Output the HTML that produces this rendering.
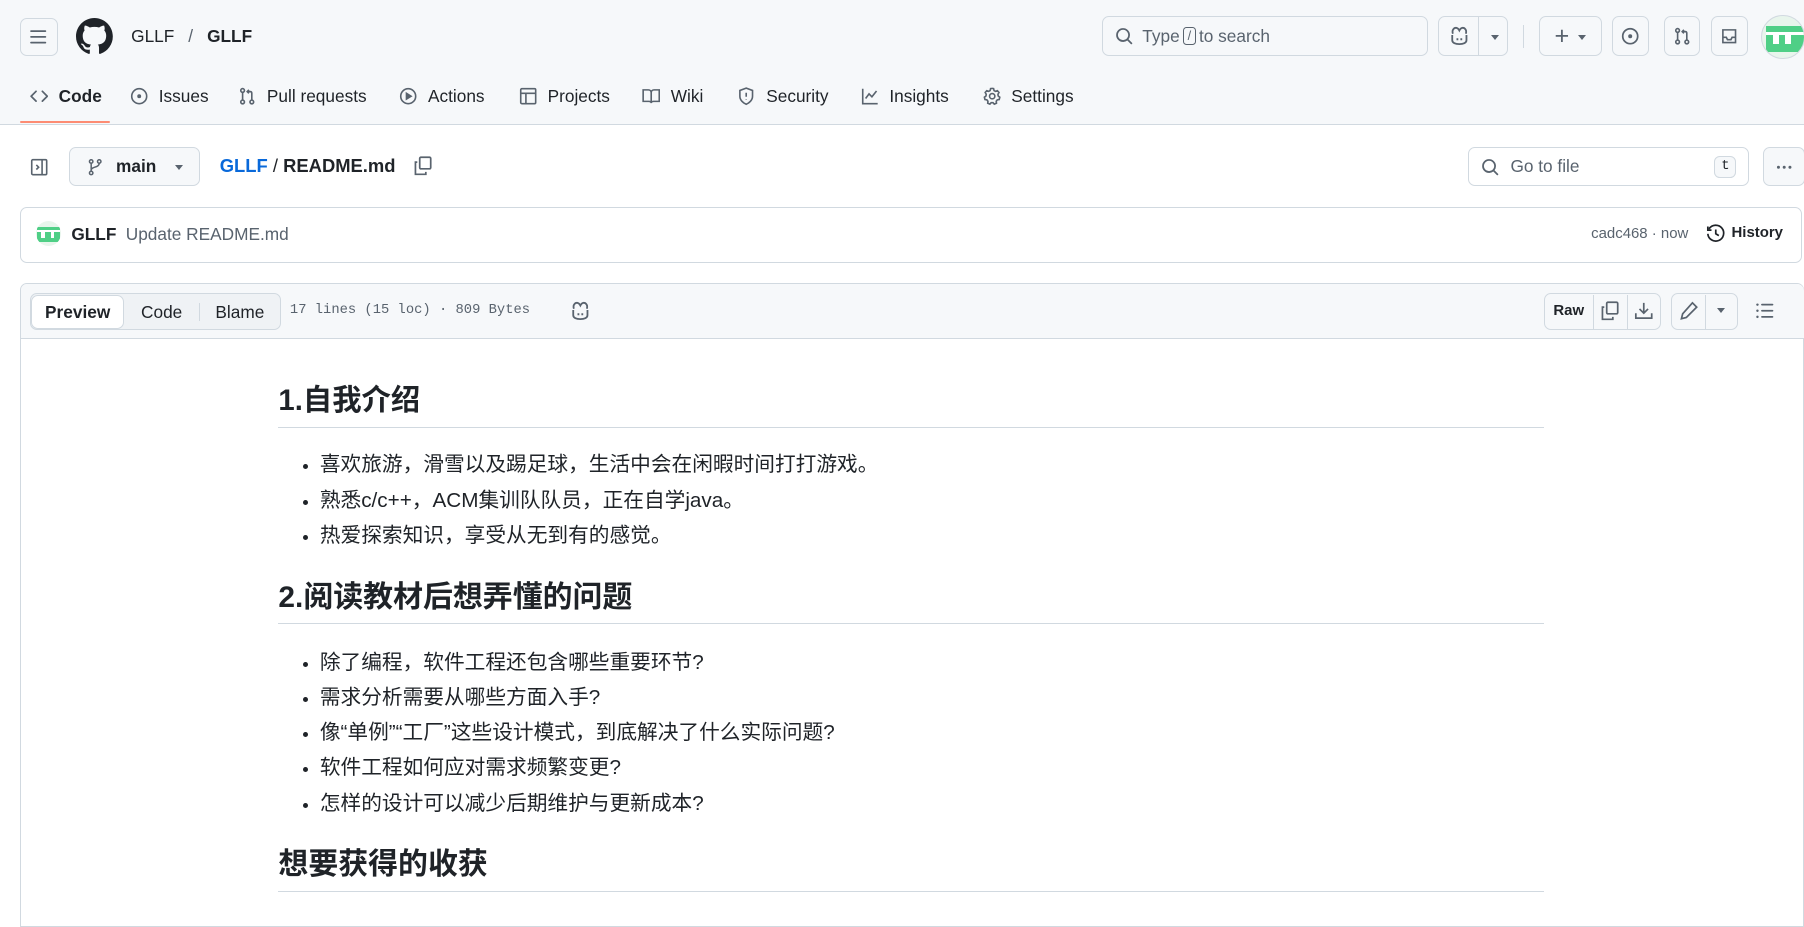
<!DOCTYPE html>
<html><head><meta charset="utf-8"><style>
html{zoom:1.15051}
*{box-sizing:border-box;margin:0;padding:0}
body{width:1568px;height:777px;overflow:hidden;background:#fff;font-family:"Liberation Sans","Noto Sans CJK SC",sans-serif;color:#1f2328;font-size:14px;position:relative}
.a{position:absolute}
.hdr{position:absolute;left:0;top:0;width:1568px;height:109px;background:#f6f8fa;border-bottom:1px solid #d1d9e0}
.btn{position:absolute;border:1px solid #d1d9e0;border-radius:6px;background:#f6f8fa;display:flex;align-items:center;justify-content:center}
svg{display:block}
.tab{position:absolute;top:74px;height:20px;display:flex;align-items:center;gap:9px;font-size:15px;color:#1f2328}
.tab svg{width:16px;height:16px}
.mut{color:#59636e}
.md h2{font-size:26px;font-weight:600;line-height:30px;padding-bottom:7px;border-bottom:1px solid #d1d9e0;margin:0}
.md h2.s{font-size:25.5px}
.md ul{margin:17px 0 24px;padding-left:36px;font-size:18px}
.md ul.b{margin-top:18px}
.md li{line-height:30.6px;height:30.6px}
.md li::marker{font-size:15px}
</style></head><body>
<div class="hdr"></div>
<div class="btn" style="left:17px;top:16px;width:33px;height:33px"><svg width="16" height="16" viewBox="0 0 16 16" fill="#59636e"><path d="M1 2.75A.75.75 0 0 1 1.75 2h12.5a.75.75 0 0 1 0 1.5H1.75A.75.75 0 0 1 1 2.75Zm0 5A.75.75 0 0 1 1.75 7h12.5a.75.75 0 0 1 0 1.5H1.75A.75.75 0 0 1 1 7.75ZM1.75 12h12.5a.75.75 0 0 1 0 1.5H1.75a.75.75 0 0 1 0-1.5Z"/></svg></div>
<svg class="a" style="left:66px;top:16px" width="32" height="32" viewBox="0 0 16 16" fill="#1f2328"><path d="M8 0c4.42 0 8 3.58 8 8a8.013 8.013 0 0 1-5.45 7.59c-.4.08-.55-.17-.55-.38 0-.27.01-1.13.01-2.2 0-.75-.25-1.23-.54-1.48 1.78-.2 3.650-.88 3.65-3.950 0-.88-.31-1.59-.82-2.150.08-.2.36-1.020-.08-2.12 0 0-.67-.22-2.2.82-.64-.18-1.32-.27-2-.27-.68 0-1.36.09-2 .27-1.53-1.03-2.2-.82-2.2-.82-.44 1.1-.16 1.92-.08 2.12-.51.56-.82 1.28-.82 2.15 0 3.06 1.86 3.75 3.64 3.95-.23.2-.44.55-.51 1.07-.46.21-1.61.55-2.33-.66-.15-.24-.6-.83-1.23-.82-.67.01-.27.38.01.53.34.19.73.9.82 1.13.16.45.68 1.31 2.690.94 0 .67.01 1.3.01 1.49 0 .21-.15.45-.55.38A7.995 7.995 0 0 1 0 8c0-4.42 3.58-8 8-8Z"/></svg>
<div class="a" style="left:114px;top:23px;font-size:15px">GLLF <span class="mut" style="margin:0 8px">/</span> <b>GLLF</b></div>
<div class="btn" style="left:958px;top:14px;width:283px;height:35px;justify-content:flex-start;padding-left:10px;background:#fff0;color:#59636e;font-size:15px"><svg width="16" height="16" viewBox="0 0 16 16" fill="#59636e"><path d="M10.68 11.74a6 6 0 0 1-7.922-8.982 6 6 0 0 1 8.982 7.922l3.04 3.04a.749.749 0 0 1-.326 1.275.749.749 0 0 1-.734-.215ZM11.5 7a4.499 4.499 0 1 0-8.997 0A4.499 4.499 0 0 0 11.5 7Z"/></svg><span style="margin-left:8px">Type</span><span style="border:1px solid #59636e;border-radius:3px;font-size:11px;padding:0 3px;margin:0 3px;line-height:14px">/</span><span>to search</span></div>
<div class="btn" style="left:1250px;top:14px;width:61px;height:35px;justify-content:flex-start"><svg style="margin-left:9px" width="18" height="18" viewBox="0 0 16 16" fill="none" stroke="#59636e" stroke-width="1.4"><path d="M3 6c-1-3 1-5 3-4.5 1 .3 1.5 1 2 2 .5-1 1-1.7 2-2 2-.5 4 1.5 3 4.5M2.5 7v4c0 2 2.5 3 5.5 3s5.5-1 5.5-3V7"/><path d="M6.5 9.5v1.5M9.5 9.5v1.5"/></svg><span style="position:absolute;left:34px;top:0;bottom:0;border-left:1px solid #d1d9e0"></span><span style="margin-left:18px;border:4px solid transparent;border-top:5px solid #59636e;margin-top:5px"></span></div>
<div class="a" style="left:1324px;top:22px;height:20px;border-left:1px solid #d1d9e0"></div>
<div class="btn" style="left:1338px;top:14px;width:54px;height:35px;gap:8px"><span style="font-size:22px;color:#59636e;line-height:20px">+</span><span style="border:4px solid transparent;border-top:5px solid #59636e;margin-top:5px"></span></div>
<div class="btn" style="left:1401px;top:14px;width:32px;height:35px"><svg width="16" height="16" viewBox="0 0 16 16" fill="none" stroke="#59636e" stroke-width="1.5"><circle cx="8" cy="8" r="6.5"/><circle cx="8" cy="8" r="1" fill="#59636e"/></svg></div>
<div class="btn" style="left:1446px;top:14px;width:32px;height:35px"><svg width="16" height="16" viewBox="0 0 16 16" fill="none" stroke="#59636e" stroke-width="1.4"><circle cx="4" cy="3" r="1.6"/><circle cx="4" cy="13" r="1.6"/><circle cx="12" cy="13" r="1.6"/><path d="M4 4.6v6.8M12 11.4V5.5c0-1-.5-1.5-1.5-1.5H8M9.5 2.5 8 4l1.5 1.5"/></svg></div>
<div class="btn" style="left:1487px;top:14px;width:32px;height:35px"><svg width="16" height="16" viewBox="0 0 16 16" fill="none" stroke="#59636e" stroke-width="1.4"><path d="M2.5 2.5h11v11h-11zM2.5 9h3l1 2h3l1-2h3"/></svg></div>
<div class="a" style="left:1531px;top:13px;width:38px;height:38px;border-radius:50%;background:#e8f5ec;overflow:hidden;border:1px solid #d1d9e0"><div class="a" style="left:3px;top:9px;width:34px;height:22px;background:#4fcf86"></div><div class="a" style="left:9px;top:16px;width:5px;height:8px;background:#fff"></div><div class="a" style="left:20px;top:16px;width:5px;height:8px;background:#fff"></div><div class="a" style="left:3px;top:14px;width:34px;height:3px;background:#fff"></div></div>

<div class="tab" style="left:26px;font-weight:600"><svg viewBox="0 0 16 16" fill="#59636e"><path d="m11.28 3.22 4.25 4.25a.75.75 0 0 1 0 1.06l-4.25 4.25a.749.749 0 0 1-1.06-1.06L13.94 8l-3.72-3.72a.749.749 0 0 1 1.06-1.06Zm-6.56 0a.75.75 0 0 1 1.06 1.06L2.06 8l3.72 3.72a.749.749 0 0 1-1.06 1.06L.47 8.53a.75.75 0 0 1 0-1.06Z"/></svg>Code</div>
<div class="a" style="left:17px;top:105px;width:79px;height:2px;background:#fd8c73;border-radius:2px"></div>
<div class="tab" style="left:113px"><svg viewBox="0 0 16 16" fill="none" stroke="#59636e" stroke-width="1.4"><circle cx="8" cy="8" r="6.5"/><circle cx="8" cy="8" r="1" fill="#59636e"/></svg>Issues</div>
<div class="tab" style="left:207px"><svg viewBox="0 0 16 16" fill="none" stroke="#59636e" stroke-width="1.4"><circle cx="4" cy="3" r="1.6"/><circle cx="4" cy="13" r="1.6"/><circle cx="12" cy="13" r="1.6"/><path d="M4 4.6v6.8M12 11.4V5.5c0-1-.5-1.5-1.5-1.5H8M9.5 2.5 8 4l1.5 1.5"/></svg>Pull requests</div>
<div class="tab" style="left:347px"><svg viewBox="0 0 16 16" fill="none" stroke="#59636e" stroke-width="1.4"><circle cx="8" cy="8" r="6.5"/><path d="M6.5 5.5v5l4-2.5z" fill="#59636e"/></svg>Actions</div>
<div class="tab" style="left:451px"><svg viewBox="0 0 16 16" fill="none" stroke="#59636e" stroke-width="1.4"><rect x="1.5" y="1.5" width="13" height="13" rx="1"/><path d="M1.5 5.5h13M6 5.5v9"/></svg>Projects</div>
<div class="tab" style="left:558px"><svg viewBox="0 0 16 16" fill="none" stroke="#59636e" stroke-width="1.4"><path d="M1 2.5h4.5c1.5 0 2.5 1 2.5 2.5v9c0-1-1-1.5-2-1.5H1zM15 2.5h-4.5C9 2.5 8 3.5 8 5v9c0-1 1-1.5 2-1.5h5z"/></svg>Wiki</div>
<div class="tab" style="left:641px"><svg viewBox="0 0 16 16" fill="none" stroke="#59636e" stroke-width="1.4"><path d="M8 1 2.5 3v5c0 3.5 3 6 5.5 7 2.5-1 5.5-3.5 5.5-7V3z"/><path d="M8 5v3.5M8 10.5v.5"/></svg>Security</div>
<div class="tab" style="left:748px"><svg viewBox="0 0 16 16" fill="none" stroke="#59636e" stroke-width="1.4"><path d="M1.5 1.5v13h13M4 10l3-4 2.5 2.5 4-5"/></svg>Insights</div>
<div class="tab" style="left:854px"><svg viewBox="0 0 16 16" fill="none" stroke="#59636e" stroke-width="1.4"><circle cx="8" cy="8" r="2.3"/><path d="M8 1.2l1.2.2.4 1.7 1.3.7 1.6-.6 1.4 1.6-.9 1.5.2 1.5 1.4 1.1-.5 2-1.7.3-.9 1.2.2 1.7-1.9.8-1.1-1.3H7.1l-1.1 1.3-1.9-.8.2-1.7-.9-1.2-1.7-.3-.5-2 1.4-1.1.2-1.5-.9-1.5 1.4-1.6 1.6.6 1.3-.7.4-1.7z"/></svg>Settings</div>

<svg class="a" style="left:26px;top:137px" width="16" height="16" viewBox="0 0 16 16" fill="none" stroke="#59636e" stroke-width="1.4"><rect x="1.5" y="1.5" width="13" height="13" rx="1"/><path d="M10.5 1.5v13M5.5 6l2 2-2 2" /></svg>
<div class="btn" style="left:60px;top:128px;width:114px;height:34px;justify-content:flex-start;padding-left:14px;gap:10px;font-size:15px;font-weight:600"><svg width="16" height="16" viewBox="0 0 16 16" fill="none" stroke="#59636e" stroke-width="1.3"><circle cx="4.5" cy="3" r="1.5"/><circle cx="11.5" cy="3" r="1.5"/><circle cx="4.5" cy="13" r="1.5"/><path d="M4.5 4.5v7M11.5 4.5c0 4-7 3-7 6"/></svg>main<span style="margin-left:6px;border:4px solid transparent;border-top:5px solid #59636e;margin-top:5px"></span></div>
<div class="a" style="left:191px;top:135px;font-size:16px;font-weight:600"><span style="color:#0969da">GLLF</span> <span style="font-weight:400">/</span> README.md</div>
<svg class="a" style="left:359px;top:136px" width="17" height="17" viewBox="0 0 16 16" fill="none" stroke="#59636e" stroke-width="1.4"><rect x="5.5" y="1" width="9" height="9.5" rx="1"/><path d="M3.5 5H2v10h8.5v-2"/></svg>
<div class="btn" style="left:1276px;top:128px;width:244px;height:34px;background:#fff;justify-content:flex-start;padding-left:10px;color:#59636e;font-size:15px"><svg width="16" height="16" viewBox="0 0 16 16" fill="#59636e"><path d="M10.68 11.74a6 6 0 0 1-7.922-8.982 6 6 0 0 1 8.982 7.922l3.04 3.04a.749.749 0 0 1-.326 1.275.749.749 0 0 1-.734-.215ZM11.5 7a4.499 4.499 0 1 0-8.997 0A4.499 4.499 0 0 0 11.5 7Z"/></svg><span style="margin-left:10px">Go to file</span><span style="position:absolute;right:10px;top:7px;border:1px solid #d1d9e0;border-radius:5px;background:#f6f8fa;font-size:12px;padding:0 5px;line-height:17px;font-family:'Liberation Mono',monospace;color:#1f2328">t</span></div>
<div class="btn" style="left:1532px;top:128px;width:37px;height:34px"><svg width="16" height="16" viewBox="0 0 16 16" fill="#59636e"><circle cx="3" cy="8" r="1.3"/><circle cx="8" cy="8" r="1.3"/><circle cx="13" cy="8" r="1.3"/></svg></div>

<div class="a" style="left:17px;top:180px;width:1549px;height:49px;border:1px solid #d1d9e0;border-radius:6px"></div>
<div class="a" style="left:31px;top:192px;width:22px;height:22px;border-radius:50%;background:#e8f5ec;overflow:hidden"><div class="a" style="left:1px;top:5px;width:20px;height:13px;background:#4fcf86"></div><div class="a" style="left:1px;top:8px;width:20px;height:2px;background:#fff"></div><div class="a" style="left:5px;top:10px;width:3px;height:5px;background:#fff"></div><div class="a" style="left:13px;top:10px;width:3px;height:5px;background:#fff"></div></div>
<div class="a" style="left:62px;top:195px;font-size:15px"><b>GLLF</b> <span class="mut" style="margin-left:4px">Update README.md</span></div>
<div class="a mut" style="left:1383px;top:196px;font-size:13px">cadc468 · now</div>
<svg class="a" style="left:1483px;top:195px" width="17" height="17" viewBox="0 0 16 16" fill="none" stroke="#1f2328" stroke-width="1.4"><path d="M2.5 4A6.5 6.5 0 1 1 1.5 8M1.5 2v3h3M8 4.5V8l2.5 1.5"/></svg>
<div class="a" style="left:1505px;top:195px;font-size:13px;font-weight:600">History</div>

<div class="a" style="left:17px;top:246px;width:1551px;height:560px;border:1px solid #d1d9e0;border-radius:6px 6px 0 0"></div>
<div class="a" style="left:18px;top:247px;width:1550px;height:48px;background:#f6f8fa;border-bottom:1px solid #d1d9e0;border-radius:6px 6px 0 0"></div>
<div class="a" style="left:26px;top:255px;width:218px;height:32px;border:1px solid #d1d9e0;border-radius:6px;background:#eff2f5"></div>
<div class="a" style="left:27px;top:256px;width:81px;height:30px;border:1px solid #d1d9e0;border-radius:6px;background:#fff;font-size:15px;font-weight:600;text-align:center;line-height:28px">Preview</div>
<div class="a" style="left:108px;top:256px;width:65px;height:30px;font-size:15px;text-align:center;line-height:30px">Code</div>
<div class="a" style="left:173px;top:263px;height:16px;border-left:1px solid #d1d9e0"></div>
<div class="a" style="left:174px;top:256px;width:69px;height:30px;font-size:15px;text-align:center;line-height:30px">Blame</div>
<div class="a mut" style="left:252px;top:263px;font-family:'Liberation Mono',monospace;font-size:12px">17 lines (15 loc) · 809 Bytes</div>
<svg class="a" style="left:495px;top:262px" width="18" height="18" viewBox="0 0 16 16" fill="none" stroke="#59636e" stroke-width="1.4"><path d="M3 6c-1-3 1-5 3-4.5 1 .3 1.5 1 2 2 .5-1 1-1.7 2-2 2-.5 4 1.5 3 4.5M2.5 7v4c0 2 2.5 3 5.5 3s5.5-1 5.5-3V7"/><path d="M6.5 9.5v1.5M9.5 9.5v1.5"/></svg>
<div class="btn" style="left:1342px;top:255px;width:102px;height:32px"></div>
<div class="a" style="left:1342px;top:255px;width:43px;height:32px;text-align:center;line-height:32px;font-size:13px;font-weight:600">Raw</div>
<div class="a" style="left:1385px;top:256px;height:30px;border-left:1px solid #d1d9e0"></div>
<svg class="a" style="left:1391px;top:262px" width="17" height="17" viewBox="0 0 16 16" fill="none" stroke="#59636e" stroke-width="1.4"><rect x="5.5" y="1" width="9" height="9.5" rx="1"/><path d="M3.5 5H2v10h8.5v-2"/></svg>
<div class="a" style="left:1414px;top:256px;height:30px;border-left:1px solid #d1d9e0"></div>
<svg class="a" style="left:1420px;top:262px" width="17" height="17" viewBox="0 0 16 16" fill="none" stroke="#59636e" stroke-width="1.4"><path d="M8 1.5v8M4.5 6.5 8 10l3.5-3.5M1.5 10v4h13v-4"/></svg>
<div class="btn" style="left:1452px;top:255px;width:59px;height:32px"></div>
<svg class="a" style="left:1459px;top:262px" width="17" height="17" viewBox="0 0 16 16" fill="none" stroke="#59636e" stroke-width="1.4"><path d="M11 1.5l3.5 3.5-8.5 8.5L2 14.5l1-4z"/></svg>
<div class="a" style="left:1482px;top:256px;height:30px;border-left:1px solid #d1d9e0"></div>
<span class="a" style="left:1492px;top:268px;border:4px solid transparent;border-top:5px solid #59636e"></span>
<svg class="a" style="left:1525px;top:262px" width="17" height="17" viewBox="0 0 16 16" fill="#59636e"><circle cx="2" cy="3" r="1"/><circle cx="2" cy="8" r="1"/><circle cx="2" cy="13" r="1"/><rect x="5" y="2.3" width="10" height="1.4" rx=".7"/><rect x="5" y="7.3" width="10" height="1.4" rx=".7"/><rect x="5" y="12.3" width="10" height="1.4" rx=".7"/></svg>

<div class="a md" style="left:242px;top:334px;width:1100px">
<h2 class="s">1.自我介绍</h2>
<ul><li>喜欢旅游，滑雪以及踢足球，生活中会在闲暇时间打打游戏。</li><li>熟悉c/c++，ACM集训队队员，正在自学java。</li><li>热爱探索知识，享受从无到有的感觉。</li></ul>
<h2>2.阅读教材后想弄懂的问题</h2>
<ul class="b"><li>除了编程，软件工程还包含哪些重要环节?</li><li>需求分析需要从哪些方面入手?</li><li>像“单例”“工厂”这些设计模式，到底解决了什么实际问题?</li><li>软件工程如何应对需求频繁变更?</li><li>怎样的设计可以减少后期维护与更新成本?</li></ul>
<h2>想要获得的收获</h2>
</div>
</body></html>
